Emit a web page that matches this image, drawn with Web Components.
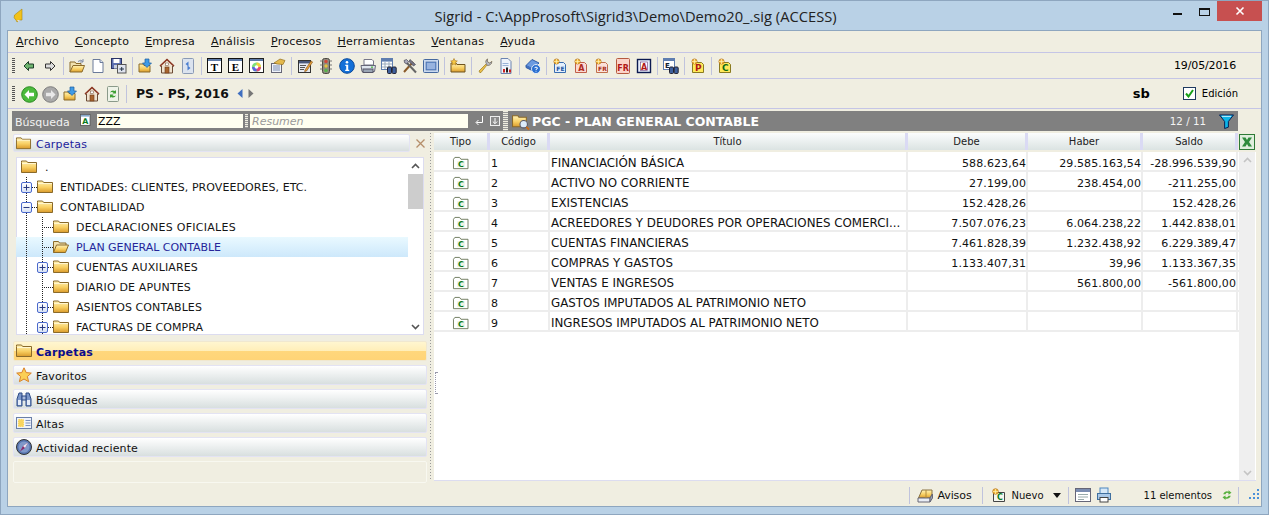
<!DOCTYPE html>
<html lang="es"><head><meta charset="utf-8"><title>Sigrid</title>
<style>html,body{margin:0;padding:0;height:515px;overflow:hidden;background:#b9d1e6;font:11px "DejaVu Sans",sans-serif}</style>
</head><body>
<x-app></x-app>
<script>
const grad=`<defs><linearGradient id="fy" x1="0" y1="0" x2="0" y2="1"><stop offset="0" stop-color="#fff3b8"/><stop offset=".55" stop-color="#f8cf62"/><stop offset="1" stop-color="#d99a2b"/></linearGradient></defs>`;
const folderP=`<path d="M.5 3.5V2h5l1.2 1.5h8.8v10H.5z" fill="url(#fy)" stroke="#8a6a2a"/><path d="M1 4.5h14" stroke="#fff6cf"/>`;
const doc=(bg,st,l,c,fs)=>`<path d="M2.5 4.5h9l2 2v8h-11z" fill="${bg}" stroke="${st}"/><circle cx="4.5" cy="3.5" r="2.6" fill="#f3b93c" stroke="#b3701a" stroke-width=".7"/><path d="M4.5 1v5M2 3.5h5" stroke="#fff2b0" stroke-width=".7"/><text x="8.4" y="13.4" font-size="${fs||8}" font-weight="700" font-family="DejaVu Sans" text-anchor="middle" fill="${c}">${l}</text>`;
const ICONS={
 folder:grad+folderP,
 folderopen:grad+`<path d="M.5 13.5V2.5h5l1 1.5h6.500v2" fill="#f1e2b0" stroke="#8a6a2a"/><path d="M.5 13.500l3-7.500h12l-3 7.500z" fill="url(#fy)" stroke="#8a6a2a"/>`,
 back:`<path d="M3 8l4.500-4.500v2.500h5v4h-5v2.500z" fill="#6fb56f" stroke="#1f3f2a"/>`,
 fwd:`<path d="M13 8L8.500 3.500v2.500h-5v4h5v2.500z" fill="#ddd" stroke="#333"/>`,
 open:grad+`<path d="M1 14V4h5l1 1.500h5V8" fill="#f1e2b0" stroke="#8a6a2a"/><path d="M1 14l3-6.500h11.500L13 14z" fill="url(#fy)" stroke="#8a6a2a"/><path d="M9 3.500q3-2.500 5 0M14 1v3h-3" fill="none" stroke="#7c8aa8"/>`,
 newdoc:`<path d="M3 1.500h7l3 3v10H3z" fill="#fff" stroke="#6a7a9a"/><path d="M10 1.500v3h3" fill="#dfe6f3" stroke="#6a7a9a"/>`,
 save:`<rect x=".5" y=".5" width="10" height="10" fill="#5c6fb0" stroke="#2a3468"/><rect x="2.500" y="1" width="6" height="4" fill="#fff"/><rect x="3" y="7" width="5" height="3.500" fill="#c9d0e0"/><rect x="6.500" y="6.500" width="8.500" height="8.500" fill="#dfe3ee" stroke="#555"/><path d="M8.500 11h4.500M10.700 9v4" stroke="#234"/>`,
 foldin:grad+`<path d="M1 14V6h4l1 1.500h6V14z" fill="url(#fy)" stroke="#8a6a2a"/><path d="M7 1h4v4h2.500L9 9.500 4.500 5H7z" fill="#3f9be6" stroke="#1c5d9e" stroke-width=".7"/>`,
 home:`<path d="M1 8l7-6.500L15 8h-1.500v7h-11V8z" fill="#efe2cf" stroke="#6b4a34"/><path d="M1 8l7-6.500L15 8" fill="none" stroke="#8e3a26" stroke-width="1.600"/><rect x="6" y="9" width="4" height="6" fill="#a8642e" stroke="#6b3a1a" stroke-width=".6"/><rect x="6.700" y="5" width="2.600" height="2.400" fill="#fff" stroke="#6b4a34" stroke-width=".5"/>`,
 tablet:`<rect x="2.500" y=".5" width="11" height="15" rx="1" fill="#dbe3ef" stroke="#8a9ab5"/><path d="M5.500 6l3-2.500v5zM10.500 10l-3 2.500v-5z" fill="#4a7ed0"/>`,
 T:`<rect x=".5" y=".5" width="14" height="14" fill="#fff" stroke="#111"/><rect x="1" y="1" width="13" height="2" fill="#5d7aa8"/><text x="7.500" y="12.800" font-size="11" font-weight="700" font-family="Liberation Serif" text-anchor="middle">T</text>`,
 E:`<rect x=".5" y=".5" width="14" height="14" fill="#fff" stroke="#111"/><rect x="1" y="1" width="13" height="2" fill="#5d7aa8"/><text x="7.500" y="12.800" font-size="11" font-weight="700" font-family="Liberation Serif" text-anchor="middle">E</text>`,
 color:`<rect x=".5" y=".5" width="14" height="14" fill="#fff" stroke="#222"/><rect x="1" y="1" width="13" height="2" fill="#5d7aa8"/><circle cx="7.500" cy="9" r="4.600" fill="#7de07a"/><path d="M7.500 9V4.400A4.600 4.600 0 0 1 12 9z" fill="#f0d23c"/><path d="M7.500 9H12a4.600 4.600 0 0 1-4.500 4.600z" fill="#e2447a"/><path d="M7.500 9v4.600A4.600 4.600 0 0 1 3 9z" fill="#5a63e0"/><circle cx="7.500" cy="9" r="1.800" fill="#fff"/>`,
 note:`<rect x="1.500" y="5.500" width="10" height="9" fill="#eef2fa" stroke="#667"/><path d="M3 8h7M3 10h7M3 12h7" stroke="#7d8db0"/><path d="M4 5l6-4 5 1.500-2 4-6-.5z" fill="#e4b94c" stroke="#94701f" stroke-width=".7"/>`,
 edit:`<rect x="1.500" y="2.500" width="12" height="12" fill="#e7ebf3" stroke="#333"/><rect x="2" y="3" width="11" height="2.400" fill="#49597d"/><path d="M3 7.500h6M3 9.500h5M3 11.500h4" stroke="#555"/><path d="M8 12l6-9 1.600 1-6 9-2 .6z" fill="#e8a13c" stroke="#7a4a12" stroke-width=".6"/>`,
 traffic:`<rect x="4.500" y=".5" width="7" height="15" rx="2" fill="#8f8a80" stroke="#4c4a42"/><circle cx="8" cy="3.500" r="1.700" fill="#d2483a"/><circle cx="8" cy="8" r="1.700" fill="#e3c13a"/><circle cx="8" cy="12.500" r="1.700" fill="#58b54a"/><path d="M2 3h2.500M2 7h2.500M2 11h2.500M11.500 3H14M11.500 7H14M11.500 11H14" stroke="#777"/>`,
 info:`<circle cx="8" cy="8" r="7.300" fill="#1470d8" stroke="#0b4a9a"/><circle cx="8" cy="4.300" r="1.300" fill="#fff"/><path d="M6.300 6.800h2.900v5h1v1.200H6.200v-1.200h1v-3.800h-.9z" fill="#fff"/>`,
 print:`<path d="M4 7V1.500h8l1.500 1.500v4z" fill="#fff" stroke="#778"/><path d="M1 7.500h14.500l-1 6H2z" fill="#dfe5ee" stroke="#667"/><rect x="3" y="11" width="10" height="3.500" fill="#9aa5b5" stroke="#556"/><circle cx="12" cy="9.200" r=".9" fill="#4bb543"/>`,
 bintable:`<rect x=".5" y=".5" width="11" height="11" fill="#fff" stroke="#5f7eb0"/><rect x="1" y="1" width="10" height="2.600" fill="#5f7eb0"/><path d="M1 6h10M1 9h10M4 4v7M8 4v7" stroke="#9ab"/><rect x="6.500" y="9" width="4" height="6.500" rx="1" fill="#3d5f9d" stroke="#223"/><rect x="11.200" y="9" width="4" height="6.500" rx="1" fill="#3d5f9d" stroke="#223"/>`,
 tools:`<path d="M2 14L11 4" stroke="#8a5a28" stroke-width="2"/><path d="M8 1.500l5.500 5-2 1.500L7 3.500z" fill="#778" stroke="#334" stroke-width=".6"/><path d="M14 14.500L5 5" stroke="#666" stroke-width="2"/><path d="M2 2.500l2.500-1 2 2-1.500 2.500-2.200-1z" fill="#aab" stroke="#334" stroke-width=".6"/>`,
 win:`<rect x=".5" y="1.500" width="15" height="13" rx="1" fill="#c9d9f0" stroke="#46689e"/><rect x="3" y="4" width="10" height="8" fill="#6d94d2" stroke="#3c5f96" stroke-width=".6"/><path d="M4 6h8M4 8h8M4 10h8" stroke="#e6eefb" stroke-width=".7"/>`,
 foldstar:grad+`<path d="M1 14V5h5l1 1.500h8V14z" fill="url(#fy)" stroke="#6f5420"/><path d="M4 .5l1 2.200 2.300.3-1.700 1.600.4 2.400L4 5.900 2 7l.4-2.400L.7 3l2.300-.3z" fill="#f6c944" stroke="#a5701a" stroke-width=".6"/>`,
 wrench:`<path d="M2 13l7.500-7.500a3.500 3.500 0 0 1 1-4.600l-.3 2.600 2.400 1.600 2.200-1.600a3.800 3.800 0 0 1-4.900 3.600L4 14.500q-1.500.8-2-1.500z" fill="#ecc04a" stroke="#9a7a20" stroke-width=".7"/><path d="M9.500 6a3.500 3.500 0 0 1 1-5l-.3 2.600 2.400 1.600 2.200-1.600a3.800 3.800 0 0 1-4.900 3.600z" fill="#b9bcc4" stroke="#667" stroke-width=".6"/>`,
 docchart:`<path d="M3 .5h7l3 3v12H3z" fill="#eef3fb" stroke="#6c84b0"/><path d="M4.500 5.500h6M4.500 7.500h6" stroke="#9ab3d8"/><rect x="5" y="11" width="2" height="3.500" fill="#c22"/><rect x="8" y="9.500" width="2" height="5" fill="#222"/><rect x="11" y="11.500" width="2" height="3" fill="#c22"/>`,
 help:`<path d="M1 7.500L7 1.500l7 3.500-6 6z" fill="#6b9ae0" stroke="#2f5ca8"/><path d="M1 7.500v2l7 3.500 1-1.500" fill="#3f6fc0" stroke="#2f5ca8"/><circle cx="11" cy="11" r="4.500" fill="#2a6fd0" stroke="#fff" stroke-width=".8"/><path d="M9.500 9.800q1.500-1.500 3 0 0 1.200-1.500 1.600v.8M11 13.200v.6" fill="none" stroke="#fff" stroke-width="1"/>`,
 fe:doc('#e4f0fc','#3a6db0','FE','#1c50a0',6),
 a1:doc('#fbd9d2','#c0604a','A','#b02a1c'),
 fr1:doc('#fbe2da','#c0704e','FR','#a82a14',6),
 fr2:`<rect x="1.500" y=".5" width="13" height="15" rx="1" fill="#fbd3c8" stroke="#b55a40"/><text x="8" y="12.500" font-size="8" font-weight="700" font-family="DejaVu Sans" text-anchor="middle" fill="#b01818">FR</text>`,
 a2:`<rect x="1.500" y="1.500" width="13" height="13" fill="#e8eefc" stroke="#0c1a50" stroke-width="1.400"/><rect x="4.500" y="4" width="7" height="8.500" fill="#fff" stroke="#6a3a7a" stroke-width=".6"/><text x="8" y="11.500" font-size="8" font-weight="700" font-family="DejaVu Sans" text-anchor="middle" fill="#b01818">A</text>`,
 ebin:`<rect x=".5" y=".5" width="11" height="11" fill="#fff" stroke="#5f7eb0"/><rect x="1" y="1" width="10" height="2" fill="#5f7eb0"/><text x="4.500" y="10" font-size="7" font-weight="700" font-family="DejaVu Sans" text-anchor="middle" fill="#123">E</text><rect x="6.500" y="9" width="4" height="6.500" rx="1" fill="#3d5f9d" stroke="#223"/><rect x="11.200" y="9" width="4" height="6.500" rx="1" fill="#3d5f9d" stroke="#223"/>`,
 p:doc('#ffe95a','#8a7a20','P','#b01818',9),
 c:doc('#ffe95a','#8a7a20','C','#0c6a12',9),
 goback:`<circle cx="8.500" cy="8.500" r="7.800" fill="#4cbb3c" stroke="#2a8a22"/><path d="M3.500 8.500L8 4v2.700h5v3.600H8V13z" fill="#fff"/>`,
 gofwd:`<circle cx="8.500" cy="8.500" r="7.800" fill="#a9a9a9" stroke="#7d7d7d"/><path d="M13.500 8.500L9 4v2.700H4v3.600h5V13z" fill="#e8e8e8"/>`,
 refresh:`<rect x="2.500" y=".5" width="11" height="15" rx="1" fill="#eef3e8" stroke="#8a9a8a"/><path d="M5 6.500q1.500-3 5-1.500l1-1v3.500H7.500l1-1q-2-.8-3.500 0zM11 9.500q-1.500 3-5 1.500l-1 1V8.500h3.500l-1 1q2 .8 3.500 0z" fill="#3da034"/>`,
 small_a:`<rect x=".5" y=".5" width="11" height="12.500" fill="#fff" stroke="#555"/><rect x="1" y="1" width="10" height="2" fill="#8ac"/><text x="6" y="11.500" font-size="9" font-weight="700" font-family="DejaVu Sans" text-anchor="middle" fill="#0a7a1a">A</text>`,
 search:grad+`<path d="M.5 13V2.500h5l1 1.500h7v9z" fill="url(#fy)" stroke="#8a6a2a"/><circle cx="11" cy="10.500" r="3.500" fill="#dcebfa" stroke="#556"/><path d="M13.500 13l2.500 2.500" stroke="#c86b1a" stroke-width="1.800"/>`,
 filter:`<path d="M.5 1h15L10 8v6l-4 1.500V8z" fill="#0db5e8" stroke="#001a50"/><path d="M3 2.500h10" stroke="#d8f4ff"/>`,
 excel:`<rect x=".5" y=".5" width="15" height="15" fill="#dfeedd" stroke="#2d7a36"/><path d="M3 3.500h3.500L8 6l1.500-2.500H13L10 8l3 4.500H9.500L8 10l-1.500 2.500H3L6 8z" fill="#2e8b3c"/>`,
 star:`<path d="M8 .8l2.200 4.800 5.100.5-3.900 3.400 1.200 5.200L8 12l-4.600 2.700 1.200-5.200L.7 6.100l5.100-.5z" fill="#fbcf55" stroke="#d9812a"/>`,
 bin:`<path d="M1 8l2-6h3v13H1zM10 2h3l2 6v7h-5z" fill="#7c97c9" stroke="#2c4a86"/><rect x="6" y="5" width="4" height="4" fill="#aabbde" stroke="#2c4a86"/><rect x="2" y="9" width="3" height="5" fill="#e5ecf8"/><rect x="11" y="9" width="3" height="5" fill="#e5ecf8"/>`,
 altas:`<rect x=".5" y="2.500" width="15" height="11" fill="#eef2fa" stroke="#6a7fa8"/><rect x="2" y="4" width="6" height="8" fill="#f7d460" stroke="#fff" stroke-dasharray="1 1" stroke-width=".6"/><path d="M9.500 5.500h5M9.500 8h5M9.500 10.500h5" stroke="#7d92bd"/>`,
 compass:`<circle cx="8" cy="8" r="7.500" fill="#5674b0" stroke="#333"/><circle cx="8" cy="8" r="5.500" fill="#7f98c9"/><path d="M12 3.500L9 9 4 12.500 7 7z" fill="#8c2a6a"/><path d="M12 3.500L7 7l2 2z" fill="#e8e8f4"/>`,
 avisos:grad+`<path d="M1.500 11L5 3h10v4l-2 4z" fill="url(#fy)" stroke="#8a7240"/><path d="M1 11h12v4H1z" fill="#e9edf5" stroke="#667"/><path d="M13 11l2.500-4v4l-2.500 4z" fill="#9aa5b5" stroke="#667"/><path d="M9 3v8" stroke="#b08a3a"/>`,
 nuevo:`<path d="M2.500 5.500h11v9h-11z" fill="#f5f7ef" stroke="#444"/><circle cx="4.500" cy="4.500" r="2.800" fill="#f3b93c" stroke="#b3701a" stroke-width=".7"/><path d="M4.500 2v5M2 4.500h5" stroke="#fff2b0" stroke-width=".7"/><text x="9" y="13" font-size="8" font-weight="700" font-family="DejaVu Sans" text-anchor="middle" fill="#0a7a1a">C</text>`,
 panel:`<rect x=".5" y="1.500" width="15" height="13" fill="#fff" stroke="#667"/><rect x="1" y="2" width="14" height="3" fill="#7a8cb0"/><path d="M3 7.500h10M3 10h10M3 12.500h6" stroke="#9aa"/>`,
 print2:`<rect x="4" y="1" width="8" height="6" fill="#d7e8f7" stroke="#4d86c0"/><rect x="1.500" y="6.500" width="13" height="6" fill="#a9c8e8" stroke="#3f6f9f"/><rect x="4" y="10.500" width="8" height="4.500" fill="#fff" stroke="#444"/>`,
 sync:`<path d="M3 7a5 5 0 0 1 7-3.500V1.500L14 5l-4 2.500V5.500A3 3 0 0 0 6 7z" fill="#57b03e"/><path d="M13 9a5 5 0 0 1-7 3.500v2L2 11l4-2.500v2A3 3 0 0 0 10 9z" fill="#57b03e"/>`,
 cdoc:`<path d="M.5 13.500V3.500l1.500-2h5l1.500 2h7.500v10z" fill="#fff" stroke="#6d7a5c"/><rect x="4.500" y="5.500" width="8" height="6.500" fill="#eaf3e4"/><text x="8.500" y="11.500" font-size="8.500" font-weight="700" font-family="DejaVu Sans" text-anchor="middle" fill="#0a7a1a">C</text>`
};
function def(name,css,html){
  customElements.define(name,class extends HTMLElement{
    connectedCallback(){
      if(this.shadowRoot)return;
      const r=this.attachShadow({mode:'open'});
      r.innerHTML=`<style>${css}</style>`+(typeof html==='function'?html(this):html);
    }
  });
}
let uid=0;
def('x-ico',':host{display:inline-flex;flex:none;align-items:center;justify-content:center}svg{display:block;overflow:visible}',h=>{
  const s=h.getAttribute('size')||16;const id='g'+(++uid);
  const src=(ICONS[h.getAttribute('name')]||'').replace(/id="fy"/g,`id="${id}"`).replace(/url\(#fy\)/g,`url(#${id})`);
  return `<svg width="${s}" height="${s}" viewBox="0 0 16 16">${src}</svg>`;
});
def('x-title',`:host{display:flex;align-items:center;height:29px;flex:none}
 .i{margin-left:6px;flex:none}
 .t{flex:1;text-align:center;font:14.700px "Open Sans",sans-serif;color:#222;padding-left:82px;white-space:nowrap;padding-top:1px}
 .c{display:flex;align-self:flex-start;height:20px}
 .b{width:27px;display:flex;align-items:center;justify-content:center}
 .x{width:45px;background:#c75050;margin-left:-1px}`,
 `<svg class="i" width="12" height="16" viewBox="0 0 12 14"><path d="M9 0L1.500 6Q0 9 3 11l1 2 3-2 2 0V4z" fill="#f2c21a" stroke="#a98610" stroke-width=".6"/><path d="M4 11h3l-1.500 2z" fill="#ddd"/></svg>
 <div class="t">Sigrid - C:\\AppProsoft\\Sigrid3\\Demo\\Demo20_.sig (ACCESS)</div>
 <div class="c"><div class="b"><svg width="9" height="2" style="margin-top:5px"><rect width="9" height="2" fill="#111"/></svg></div><div class="b"><svg width="11" height="8" style="margin-top:2px"><rect x=".5" y=".5" width="10" height="7" fill="none" stroke="#111"/><rect width="11" height="2" fill="#111"/></svg></div><div class="b x"><svg width="10" height="10"><path d="M1.500 1.500l7 7M8.500 1.500l-7 7" stroke="#fff" stroke-width="1.600"/></svg></div></div>`);
def('x-menu',`:host{display:flex;gap:16px;height:21px;padding-left:8px;align-items:center;border-bottom:1px solid #c5c5e6;flex:none;color:#111;letter-spacing:.25px}
 u{text-decoration:underline;text-underline-offset:1px}`,
 ['Archivo','Concepto','Empresa','Análisis','Procesos','Herramientas','Ventanas','Ayuda'].map(m=>`<span><u>${m[0]}</u>${m.slice(1)}</span>`).join(''));
def('x-bar',`:host{display:flex;align-items:center;flex:none;border-bottom:1px solid #c5c5e6;padding-left:4px;height:var(--h,25px)}
 .grip{width:3px;height:16px;margin:0 3px 0 0;background:repeating-linear-gradient(#555 0 1px,#f0eee1 1px 2px)}`,
 `<div class="grip"></div><slot></slot>`);
def('x-tools',`:host{display:flex;align-items:center;height:100%}
 x-ico{width:21px}.s{width:1px;height:18px;background:#c0c3dd;margin:0 2.500px}`,h=>h.getAttribute('items').split(' ').map(n=>n==='|'?'<div class="s"></div>':`<x-ico name="${n}"></x-ico>`).join(''));
def('x-search',`:host{display:flex;align-items:center;height:20px;background:#808080;margin:2px 23px 0 4px;flex:none;color:#f2f2f2;font-size:11px}
 .l{width:69px;padding-left:3px;box-sizing:border-box;padding-top:3px}
 .in{height:14px;background:#fffff0;color:#000;line-height:15px;padding-left:1px;box-sizing:border-box}
 .g{width:3px;height:14px;margin:0 2px;background:repeating-linear-gradient(#efeee0 0 1px,#999 1px 2px)}
 .r{font-style:italic;color:#9a9a9a;padding-left:2px}
 .t{font-weight:700;font-size:12.500px;color:#fff;margin-left:3px;flex:1;white-space:nowrap;padding-top:1px}
 .n{font-size:10.300px;color:#f4f4f4;margin-right:13px}`,
 `<div class="l">Búsqueda</div><x-ico name="small_a" size="14" style="width:12px;margin-right:4px"></x-ico><div class="in" style="width:146px">ZZZ</div><div class="g"></div><div class="in r" style="width:218px">Resumen</div>
 <svg width="8" height="10" style="margin:0 7px;flex:none"><path d="M7.500 0v6.500H1.500M3.500 4L1 6.500 3.500 9" fill="none" stroke="#fff"/></svg>
 <svg width="10" height="10" style="margin-right:3px;flex:none"><rect x=".5" y=".5" width="9" height="9" fill="#8a8a8a" stroke="#eee"/><path d="M5 2v5.500M2.800 5.500L5 7.700l2.200-2.200" fill="none" stroke="#fff"/></svg>
 <div class="g" style="height:20px;width:5px;margin:0"></div><x-ico name="search" size="17" style="margin-left:4px"></x-ico><div class="t">PGC - PLAN GENERAL CONTABLE</div><div class="n">12 / 11</div><x-ico name="filter" size="15" style="margin-right:4px"></x-ico>`);
def('x-hdr',`:host{display:flex;align-items:center;height:18px;box-sizing:border-box;border:1px solid #e3e3f3;border-radius:2px;background:linear-gradient(#fff,#d8dfdf);color:#1c1c9c;gap:5px;padding-left:2px;letter-spacing:.2px}`,`<slot></slot>`);
def('x-accord',`:host{display:flex;flex:none;align-items:center;height:20px;box-sizing:border-box;margin-bottom:4px;border:1px solid #e3e3f3;border-radius:2px;background:linear-gradient(#fff,#d8dfdf);color:#111;gap:4px;padding-left:2px;letter-spacing:.14px}
 :host([on]){background:linear-gradient(#fff6d0,#ffeeb8 50%,#ffd77c 50%,#ffd477);color:#0b0b8c;font-weight:700;border-color:#f0e8d0;letter-spacing:.2px}
 :host([blank]){background:none;border-color:#f8f8f0;height:22px}
 span{padding-top:3px}`,h=>h.hasAttribute('blank')?'':`<x-ico name="${h.getAttribute('icon')}" size="16"></x-ico><span><slot></slot></span>`);
const vd='repeating-linear-gradient(#222 0 1px,transparent 1px 2px)',hd='repeating-linear-gradient(90deg,#222 0 1px,transparent 1px 2px)';
def('x-node',`:host{display:flex;align-items:center;height:20px;flex:none;white-space:nowrap;color:#151515}
 :host([sel]){background:linear-gradient(#e9f9ff,#cde8fb);color:#26269a}
 .v{width:16px;height:20px;flex:none;background:${vd} 10px 0/1px 100% no-repeat}
 .c{width:21px;height:20px;flex:none;display:flex;align-items:center;background:${vd} 10px 0/1px 100% no-repeat,${hd} 10px 10px/11px 1px no-repeat}
 .b{width:11px;height:11px;margin-left:5px;box-sizing:border-box;border:1px solid #4a69cc;border-radius:2px;background:linear-gradient(#fff,#d8e2f4);display:flex;align-items:center;justify-content:center}
 .t{padding-top:1px}`,h=>{
   const l=+h.getAttribute('level'),e=h.getAttribute('exp');
   let s='';
   if(l>0){ s+='<div class="v"></div>'.repeat(l-1);
     const d=e==='+'?'M1.500 4.500h6M4.500 1.500v6':'M1.500 4.500h6';
     s+=`<div class="c">${e?`<div class="b"><svg width="9" height="9"><path d="${d}" stroke="#2a3a80"/></svg></div>`:''}</div>`;
   } else s='<div style="width:5px"></div>';
   return s+`<x-ico name="${h.hasAttribute('sel')?'folderopen':'folder'}"></x-ico><div class="t" style="margin-left:${l?7:8}px;letter-spacing:${h.getAttribute('ls')||0}px"><slot></slot></div>`;
 });
def('x-scroll',`:host{display:flex;flex-direction:column;width:var(--w,15px);background:var(--bg,#efefef);flex:none;align-items:stretch}
 .a{height:15px;display:flex;align-items:center;justify-content:center;flex:none}
 .tr{flex:1}.th{height:var(--th,0);background:#cdcdcd;margin-top:var(--tt,0)}`,
 h=>`<div class="a"><svg width="9" height="6"><path d="M1 5l3.500-3.500L8 5" fill="none" stroke="${h.getAttribute('c')||'#555'}" stroke-width="1.600"/></svg></div><div class="tr"><div class="th"></div></div><div class="a"><svg width="9" height="6"><path d="M1 1l3.500 3.500L8 1" fill="none" stroke="${h.getAttribute('c')||'#555'}" stroke-width="1.600"/></svg></div>`);
def('x-tree',`:host{display:flex;height:178px;margin:5px 3px 6px 3px;box-sizing:border-box;border:1px solid #dcdcf0;background:#fff;flex:none}
 .w{flex:1;overflow:hidden;margin:-1px 0 0 -1px;display:flex;flex-direction:column}
 x-scroll{--th:35px;--tt:1px;--w:15px;--bg:#fff}`,`<div class="w"><slot></slot></div><x-scroll></x-scroll>`);
const COLS='56px 60px 358px 120px 115px 95px';
def('x-th',`:host{display:grid;grid-template-columns:${COLS};height:17px;color:#222;font-size:10px}
 div{display:flex;align-items:center;justify-content:center;background:linear-gradient(#fbfdfd,#dbe3e2);border-right:3px solid #dadaf4;box-sizing:border-box}`,
 ['Tipo','Código','Título','Debe','Haber','Saldo'].map(t=>`<div>${t}</div>`).join(''));
def('x-row',`:host{display:grid;grid-template-columns:${COLS};height:20px;box-sizing:border-box;border-bottom:2px solid #ededed;color:#111}
 div{display:flex;align-items:center;border-right:2px solid #ededed;box-sizing:border-box;white-space:nowrap;overflow:hidden;padding:4px 0 0 1px}
 .i{justify-content:center;padding-right:2px}.r{justify-content:flex-end;padding-left:0;letter-spacing:.1px}
 .u{font-size:11.850px}`,h=>{
   const d=h.getAttribute('d').split('|');
   return `<div class="i"><x-ico name="cdoc" size="15"></x-ico></div><div>${d[0]}</div><div class="u">${d[1]}</div><div class="r">${d[2]}</div><div class="r">${d[3]}</div><div class="r">${d[4]}</div>`;
 });
def('x-grid',`:host{display:flex;flex-direction:column;width:822px;height:350px;flex:none;padding-top:2px;box-sizing:border-box;position:relative}
 .h{display:flex;height:17px;flex:none}.x{margin:1px 0 0 1px}
 .b{display:flex;flex:1;margin-top:2px;background:#fff;border-bottom:1px solid #dcdcf0;min-height:0}
 .rows{width:805px;flex:none}x-scroll{--w:16px;flex:none}
 .hd{position:absolute;left:1px;top:241px;width:1px;height:20px;border:1px dotted #99a;border-right:0}`,
 `<div class="h"><x-th></x-th><x-ico class="x" name="excel" size="16"></x-ico></div><div class="b"><div class="rows"><slot></slot></div><x-scroll c="#c4c4c4"></x-scroll></div><div class="hd"></div>`);
def('x-status',`:host{display:flex;align-items:center;height:25px;box-sizing:border-box;padding-top:3px;flex:none;justify-content:flex-end;color:#111;font-size:10px}
 .s{width:1px;height:17px;background:#c0c3dd;flex:none}`,
 `<div class="s"></div><x-ico name="avisos" size="16" style="margin:0 4px 0 7px"></x-ico><span style="font-size:11px;letter-spacing:-.1px">Avisos</span><div class="s" style="margin-left:10px"></div><x-ico name="nuevo" size="16" style="margin:0 5px 0 8px"></x-ico><span>Nuevo</span><svg width="8" height="5" style="margin:0 7px 0 9px"><path d="M0 0h8L4 5z" fill="#111"/></svg><div class="s"></div><x-ico name="panel" size="16" style="margin:0 5px 0 6px"></x-ico><x-ico name="print2" size="16" style="margin-right:32px"></x-ico><span>11 elementos</span><x-ico name="sync" size="12" style="margin:0 5px 0 9px"></x-ico><div class="s"></div>
 <svg width="12" height="12" style="margin:0 0 0 10px"><g fill="#4a90d9"><rect x="8" y="0" width="2" height="2"/><rect x="4" y="4" width="2" height="2"/><rect x="8" y="4" width="2" height="2"/><rect x="0" y="8" width="2" height="2"/><rect x="4" y="8" width="2" height="2"/><rect x="8" y="8" width="2" height="2"/></g></svg>`);
const TREE=[[0,'','.',0,0],[1,'+','ENTIDADES: CLIENTES, PROVEEDORES, ETC.',0,.07],[1,'-','CONTABILIDAD',0,.2],[2,'','DECLARACIONES OFICIALES',0,.28],[2,'','PLAN GENERAL CONTABLE',1,-.04],[2,'+','CUENTAS AUXILIARES',0,.13],[2,'','DIARIO DE APUNTES',0,.16],[2,'+','ASIENTOS CONTABLES',0,.09],[2,'+','FACTURAS DE COMPRA',0,.03]];
const ROWS=['1|FINANCIACIÓN BÁSICA|588.623,64|29.585.163,54|-28.996.539,90','2|ACTIVO NO CORRIENTE|27.199,00|238.454,00|-211.255,00','3|EXISTENCIAS|152.428,26||152.428,26','4|ACREEDORES Y DEUDORES POR OPERACIONES COMERCI...|7.507.076,23|6.064.238,22|1.442.838,01','5|CUENTAS FINANCIERAS|7.461.828,39|1.232.438,92|6.229.389,47','6|COMPRAS Y GASTOS|1.133.407,31|39,96|1.133.367,35','7|VENTAS E INGRESOS||561.800,00|-561.800,00','8|GASTOS IMPUTADOS AL PATRIMONIO NETO|||','9|INGRESOS IMPUTADOS AL PATRIMONIO NETO|||'];
def('x-app',`:host{display:flex;flex-direction:column;height:515px;box-sizing:border-box;border:1px solid #8ea6bf;padding:0 6px 7px 6px;background:#b9d1e6}
 .client{flex:1;display:flex;flex-direction:column;background:#f0eee1;border:1px solid #8ea6bf;min-height:0;font:11px "DejaVu Sans",sans-serif}
 .date{margin-left:auto;margin-right:25px;letter-spacing:-.14px}
 .ps{font-weight:700;font-size:12.350px;margin-left:7px;color:#111}
 .sb{font-weight:700;font-size:13px;margin-left:auto;margin-right:33px}
 .chk{width:13px;height:13px;box-sizing:border-box;border:1px solid #1e3a5f;background:#fff;display:flex;align-items:center;justify-content:center;margin-right:6px}
 .ed{margin-right:23px;font-size:10px}
 .main{display:flex;flex:1;min-height:0}
 .left{width:414px;margin-left:5px;flex:none;padding-top:3px;display:flex;flex-direction:column}
 .lh{display:flex;align-items:center;flex:none}.lh x-hdr{width:397px;flex:none}.lh svg{margin-left:6px}
 .split{width:7px;flex:none;background:repeating-linear-gradient(#999 0 1px,transparent 1px 3px) 3px 0/1px 100% no-repeat;margin-top:2px;height:347px}
 `,`<x-title></x-title><div class="client">
 <x-menu></x-menu>
 <x-bar><x-tools items="back fwd | open newdoc save | foldin home tablet | T E color note | edit traffic info print bintable tools win | foldstar | wrench docchart | help | fe a1 fr1 fr2 a2 | ebin | p | c"></x-tools><span class="date">19/05/2016</span></x-bar>
 <x-bar style="--h:29px"><x-tools items="goback gofwd foldin home refresh |"></x-tools><span class="ps">PS - PS, 2016</span>
  <svg width="6" height="9" style="margin-left:8px;flex:none"><path d="M5.500 0v9L.5 4.500z" fill="#3f6fc0"/></svg><svg width="6" height="9" style="margin-left:5px;flex:none"><path d="M.5 0v9l5-4.500z" fill="#777"/></svg>
  <span class="sb">sb</span><div class="chk"><svg width="9" height="9"><path d="M1 4.500l2.500 3L8 1" fill="none" stroke="#18a018" stroke-width="2"/></svg></div><span class="ed">Edición</span></x-bar>
 <x-search></x-search>
 <div class="main"><div class="left">
   <div class="lh"><x-hdr><x-ico name="folder" size="15"></x-ico><span style="padding-top:3px">Carpetas</span></x-hdr><svg width="9" height="9"><path d="M.5.5l8 8M8.500.5l-8 8" stroke="#b58e6a" stroke-width="1.300"/></svg></div>
   <x-tree>${TREE.map(t=>`<x-node level="${t[0]}" exp="${t[1]}" ls="${t[4]}" ${t[3]?'sel':''}>${t[2]}</x-node>`).join('')}</x-tree>
   <x-accord on icon="folder">Carpetas</x-accord><x-accord icon="star">Favoritos</x-accord><x-accord icon="bin">Búsquedas</x-accord><x-accord icon="altas">Altas</x-accord><x-accord icon="compass">Actividad reciente</x-accord><x-accord blank></x-accord>
 </div><div class="split"></div>
 <x-grid>${ROWS.map(r=>`<x-row d="${r}"></x-row>`).join('')}</x-grid></div>
 <x-status></x-status>
 </div>`);
</script>
</body></html>
